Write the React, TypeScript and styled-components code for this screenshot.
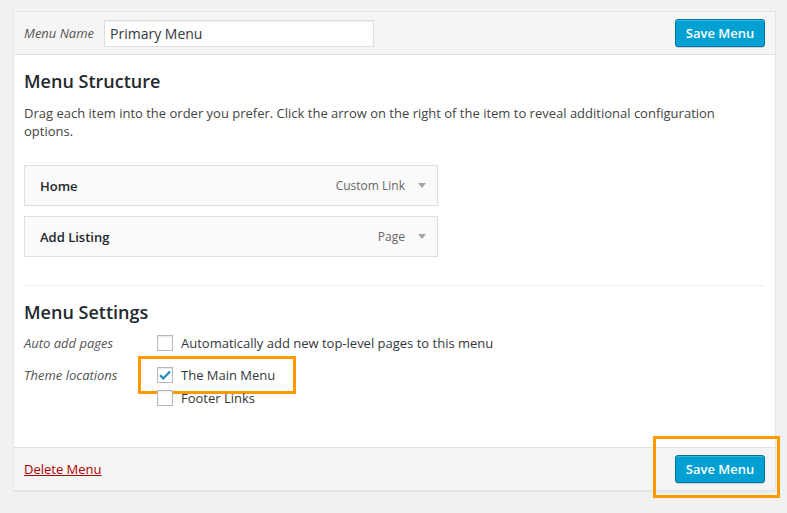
import styled, { createGlobalStyle } from 'styled-components';

const GlobalStyle = createGlobalStyle`
  body {
    margin: 0;
    background: #f1f1f1;
    font-family: 'Open Sans', 'Liberation Sans', sans-serif;
    font-size: 13px;
    color: #444;
  }
`;

type MenuItem = { title: string; type: string };

const items: MenuItem[] = [
  { title: 'Home', type: 'Custom Link' },
  { title: 'Add Listing', type: 'Page' },
];

const Arrow = () => (
  <svg width="8" height="5" viewBox="0 0 8 5">
    <path d="M0 0 L8 0 L4 5 Z" fill="#a0a5aa" />
  </svg>
);

const Check = () => (
  <svg width="12" height="10" viewBox="0 0 12 10">
    <path d="M1 5.2 L4.3 8.4 L11 1.4" stroke="#1e8cbe" strokeWidth="2.2" fill="none" />
  </svg>
);

const App = () => {
  return (
    <Page>
      <GlobalStyle />
      <Panel>
        <Header>
          <NameField>
            <FieldLabel>Menu Name</FieldLabel>
            <NameInput defaultValue="Primary Menu" />
          </NameField>
          <Button>Save Menu</Button>
        </Header>
        <Body>
          <Heading>Menu Structure</Heading>
          <Description>
            Drag each item into the order you prefer. Click the arrow on the right of the item to reveal additional
            configuration options.
          </Description>
          <ItemList>
            {items.map((item) => (
              <Item key={item.title}>
                <ItemTitle>{item.title}</ItemTitle>
                <ItemMeta>
                  <span>{item.type}</span>
                  <Arrow />
                </ItemMeta>
              </Item>
            ))}
          </ItemList>
          <Divider />
          <SettingsHeading>Menu Settings</SettingsHeading>
          <SettingsGrid>
            <SettingLabel>Auto add pages</SettingLabel>
            <Options>
              <Option>
                <Box />
                Automatically add new top-level pages to this menu
              </Option>
            </Options>
            <SettingLabel>Theme locations</SettingLabel>
            <Options>
              <Option>
                <Box>
                  <Check />
                </Box>
                The Main Menu
                <Highlight $top={-8} $left={-19} $width={158} $height={38} />
              </Option>
              <Option>
                <Box />
                Footer Links
              </Option>
            </Options>
          </SettingsGrid>
        </Body>
        <Footer>
          <DeleteLink href="#">Delete Menu</DeleteLink>
          <SaveWrap>
            <Button>Save Menu</Button>
            <Highlight $top={-19} $left={-22} $width={127} $height={62} />
          </SaveWrap>
        </Footer>
      </Panel>
    </Page>
  );
};

export default App;

const Page = styled.div`
  padding: 11px 0 22px 13px;
  width: 763px;
`;

const Panel = styled.div`
  border: 1px solid #e5e5e5;
  background: #fff;
  box-shadow: 0 1px 1px rgba(0, 0, 0, 0.04);
`;

const Header = styled.div`
  height: 42px;
  display: flex;
  align-items: center;
  justify-content: space-between;
  padding: 0 10px;
  background: #f5f5f5;
  border-bottom: 1px solid #dfdfdf;
`;

const NameField = styled.div`
  display: flex;
  align-items: center;
  gap: 10px;
`;

const FieldLabel = styled.span`
  font-style: italic;
  color: #555;
  font-size: 13px;
`;

const NameInput = styled.input`
  width: 270px;
  height: 27px;
  box-sizing: border-box;
  border: 1px solid #ddd;
  box-shadow: inset 0 1px 2px rgba(0, 0, 0, 0.07);
  padding: 0 5px;
  font-family: 'Open Sans', 'Liberation Sans', sans-serif;
  font-size: 14px;
  color: #32373c;
  outline: none;
`;

const Button = styled.button`
  width: 90px;
  height: 28px;
  box-sizing: border-box;
  padding: 0;
  background: #00a0d2;
  border: 1px solid #0073aa;
  border-radius: 3px;
  box-shadow: inset 0 1px 0 rgba(120, 200, 230, 0.5), 0 1px 0 rgba(0, 0, 0, 0.15);
  color: #fff;
  font-family: 'Open Sans', 'Liberation Sans', sans-serif;
  font-size: 13px;
  font-weight: 600;
`;

const Body = styled.div`
  padding: 15px 10px 38px;
`;

const Heading = styled.h3`
  margin: 0 0 12px;
  font-size: 18px;
  font-weight: 600;
  line-height: 22px;
  color: #23282d;
`;

const Description = styled.p`
  margin: 0;
  line-height: 18px;
  color: #444;
`;

const ItemList = styled.div`
  display: flex;
  flex-direction: column;
  gap: 10px;
  margin-top: 25px;
`;

const Item = styled.div`
  width: 414px;
  height: 41px;
  box-sizing: border-box;
  display: flex;
  align-items: center;
  justify-content: space-between;
  padding: 0 11px 0 15px;
  background: #fafafa;
  border: 1px solid #dfdfdf;
`;

const ItemTitle = styled.span`
  font-weight: 600;
  color: #23282d;
`;

const ItemMeta = styled.span`
  display: flex;
  align-items: center;
  gap: 13px;
  color: #666;
  font-size: 12px;
`;

const Divider = styled.div`
  height: 1px;
  background: #eee;
  margin-top: 28px;
`;

const SettingsHeading = styled(Heading)`
  margin: 15px 0 9px;
`;

const SettingsGrid = styled.div`
  display: grid;
  grid-template-columns: 133px 1fr;
  row-gap: 10px;
`;

const SettingLabel = styled.span`
  font-style: italic;
  color: #555;
  line-height: 22px;
`;

const Options = styled.div`
  display: flex;
  flex-direction: column;
  gap: 1px;
`;

const Option = styled.label`
  position: relative;
  display: flex;
  align-items: center;
  gap: 8px;
  height: 22px;
  color: #32373c;
`;

const Box = styled.span`
  width: 16px;
  height: 16px;
  box-sizing: border-box;
  display: flex;
  align-items: center;
  justify-content: center;
  border: 1px solid #b4b9be;
  background: #fff;
  box-shadow: inset 0 1px 2px rgba(0, 0, 0, 0.1);
`;

const Highlight = styled.span<{ $top: number; $left: number; $width: number; $height: number }>`
  position: absolute;
  top: ${(p) => p.$top}px;
  left: ${(p) => p.$left}px;
  width: ${(p) => p.$width}px;
  height: ${(p) => p.$height}px;
  box-sizing: border-box;
  border: 3px solid #f90;
  pointer-events: none;
`;

const Footer = styled.div`
  height: 42px;
  display: flex;
  align-items: center;
  justify-content: space-between;
  padding: 0 10px;
  background: #f5f5f5;
  border-top: 1px solid #dfdfdf;
`;

const DeleteLink = styled.a`
  color: #a00;
  text-decoration: underline;
`;

const SaveWrap = styled.div`
  position: relative;
  display: flex;
`;
